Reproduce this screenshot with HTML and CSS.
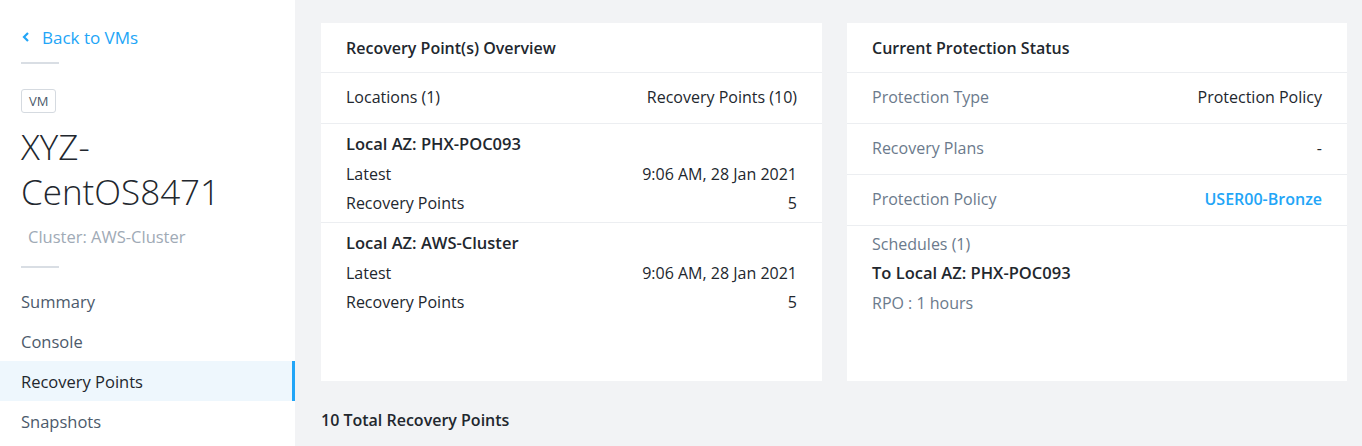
FILE: index.html
```html
<!DOCTYPE html>
<html>
<head>
<meta charset="utf-8">
<link rel="stylesheet" href="styles.css">
</head>
<body>
<div class="app">
  <aside class="sidebar">
    <a class="back" href="#">
      <svg class="chev" width="8" height="10" viewBox="0 0 8 10"><path d="M6 1 L2 5 L6 9" fill="none" stroke="#22a5f7" stroke-width="2.2"/></svg>
      <span>Back to VMs</span>
    </a>
    <div class="divider"></div>
    <div class="badge">VM</div>
    <h1 class="title">XYZ-<br>CentOS8471</h1>
    <div class="cluster">Cluster: AWS-Cluster</div>
    <div class="divider second"></div>
    <nav class="nav">
      <div class="nav-item">Summary</div>
      <div class="nav-item">Console</div>
      <div class="nav-item active">Recovery Points</div>
      <div class="nav-item">Snapshots</div>
    </nav>
  </aside>
  <main class="main">
    <div class="cards">
      <section class="card">
        <div class="card-head">Recovery Point(s) Overview</div>
        <div class="row dark">
          <span>Locations (1)</span><span>Recovery Points (10)</span>
        </div>
        <div class="group">
          <div class="group-title">Local AZ: PHX-POC093</div>
          <div class="kv"><span>Latest</span><span>9:06 AM, 28 Jan 2021</span></div>
          <div class="kv"><span>Recovery Points</span><span>5</span></div>
        </div>
        <div class="group last">
          <div class="group-title">Local AZ: AWS-Cluster</div>
          <div class="kv"><span>Latest</span><span>9:06 AM, 28 Jan 2021</span></div>
          <div class="kv"><span>Recovery Points</span><span>5</span></div>
        </div>
      </section>
      <section class="card">
        <div class="card-head">Current Protection Status</div>
        <div class="row"><span class="lbl">Protection Type</span><span>Protection Policy</span></div>
        <div class="row"><span class="lbl">Recovery Plans</span><span>-</span></div>
        <div class="row"><span class="lbl">Protection Policy</span><a class="link" href="#">USER00-Bronze</a></div>
        <div class="sched">
          <div class="lbl">Schedules (1)</div>
          <div class="group-title">To Local AZ: PHX-POC093</div>
          <div class="lbl">RPO : 1 hours</div>
        </div>
      </section>
    </div>
    <div class="total">10 Total Recovery Points</div>
  </main>
</div>
</body>
</html>
```

FILE: styles.css
```css
* { box-sizing: border-box; }
html, body { margin: 0; padding: 0; }
body {
  font-family: "Open Sans", "Lato", sans-serif;
  font-size: 16px;
  color: #22272e;
  background: #f2f3f5;
}
.app { display: flex; height: 446px; }
.sidebar {
  width: 295px;
  flex: none;
  background: #fff;
  padding-top: 26px;
}
.back {
  display: flex;
  align-items: center;
  gap: 12px;
  margin-left: 21px;
  color: #22a5f7;
  text-decoration: none;
  height: 22px;
  font-size: 17px;
}
.chev { margin-left: 1px; }
.divider {
  width: 38px;
  height: 2px;
  background: #d9dee4;
  margin-left: 21px;
  margin-top: 14px;
}
.badge {
  display: inline-block;
  margin: 25px 0 0 21px;
  border: 1px solid #d5dae0;
  border-radius: 3px;
  font-size: 13px;
  color: #4c5a6b;
  padding: 3px 7px;
  line-height: 16px;
}
.title {
  margin: 11px 0 0 21px;
  font-weight: 300;
  font-size: 35px;
  line-height: 45px;
  color: #22272e;
}
.cluster {
  margin: 13px 0 0 28px;
  color: #a0aab6;
  font-size: 16.5px;
  line-height: 20px;
}
.divider.second { margin-top: 19px; }
.nav { margin-top: 13px; }
.nav-item {
  height: 40px;
  display: flex;
  align-items: center;
  padding-left: 21px;
  color: #4c5a6b;
  font-size: 16.5px;
}
.nav-item.active {
  background: #eef7fd;
  color: #22272e;
  border-right: 3px solid #22a5f7;
}
.main {
  flex: 1;
  padding: 23px 15px 0 26px;
}
.cards {
  display: grid;
  grid-template-columns: 501px 500px;
  gap: 25px;
}
.card {
  background: #fff;
  height: 358px;
}
.card-head {
  height: 50px;
  display: flex;
  align-items: center;
  padding: 0 25px;
  font-weight: 600;
  font-size: 16px;
  border-bottom: 1px solid #eceef1;
}
.row {
  height: 51px;
  display: flex;
  align-items: center;
  justify-content: space-between;
  padding: 0 25px 2px;
  border-bottom: 1px solid #eceef1;
}
.lbl { color: #6b7a8c; }
.link { color: #22a5f7; text-decoration: none; font-weight: 600; }
.group {
  padding: 10px 25px 9px;
  border-bottom: 1px solid #eceef1;
}
.group.last { border-bottom: none; }
.group-title {
  font-weight: 600;
  font-size: 16.5px;
  line-height: 20px;
}
.kv {
  display: flex;
  justify-content: space-between;
  line-height: 20px;
  margin-top: 10px;
}
.kv + .kv { margin-top: 9px; }
.sched {
  padding: 8px 25px;
  line-height: 20px;
}
.sched .group-title { margin: 9px 0 10px; }
.total {
  margin-top: 28px;
  font-weight: 600;
  font-size: 16px;
}
```
